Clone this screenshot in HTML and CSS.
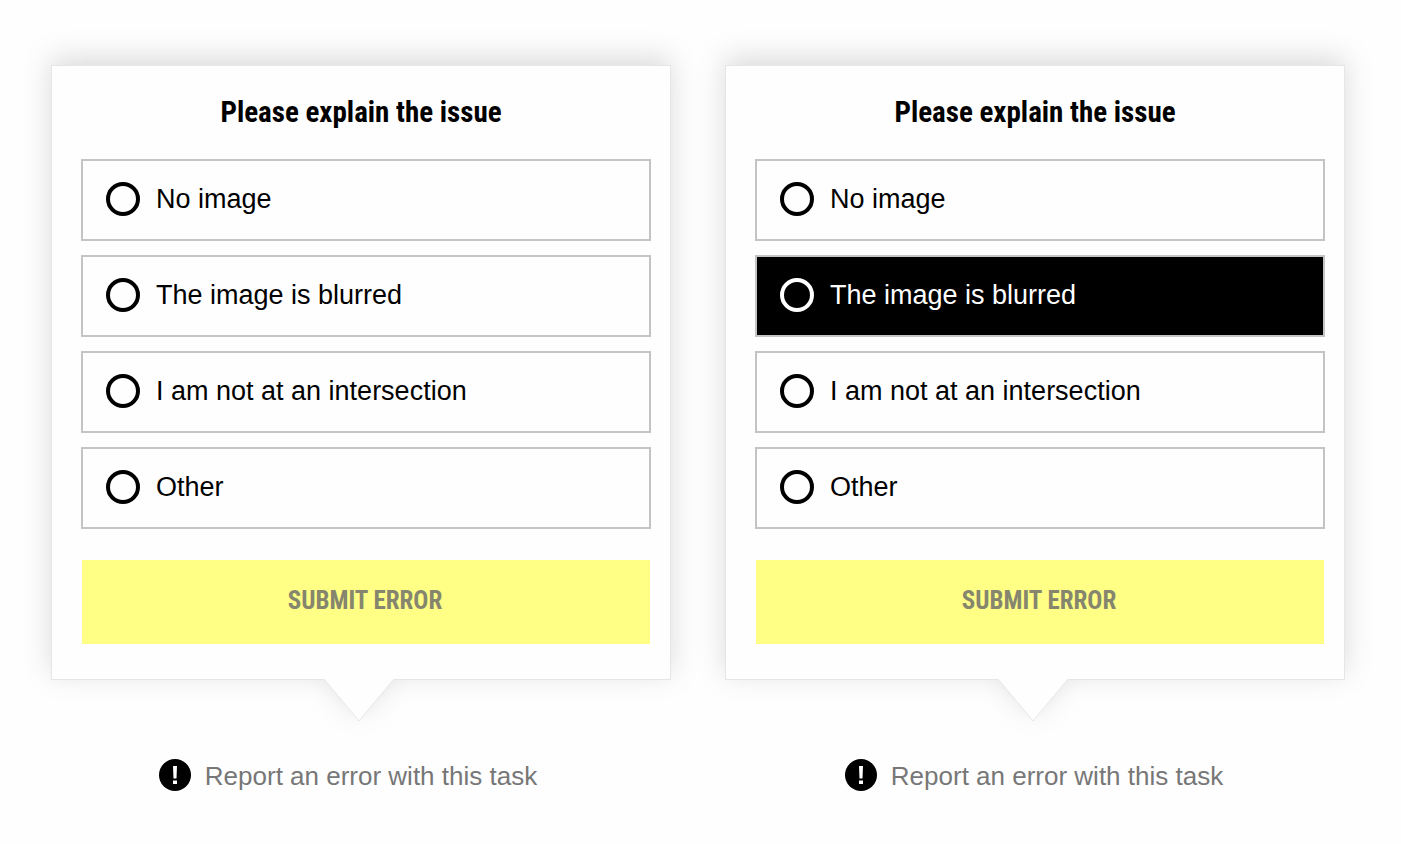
FILE: index.html
```html
<!DOCTYPE html>
<html lang="en">
<head>
    <meta charset="UTF-8">
    <meta name="viewport" content="width=device-width, initial-scale=1.0">
    <title>Report an error</title>
    <link rel="stylesheet" href="styles.css">
</head>
<body>
    <main class="popups">
        <form class="popup">
            <h2 class="popup-title" id="title1">Please explain the issue</h2>
            <fieldset class="options" aria-labelledby="title1">
                <label class="option"><input type="radio" name="issue" value="none"><span>No image</span></label>
                <label class="option"><input type="radio" name="issue" value="blurred"><span>The image is blurred</span></label>
                <label class="option"><input type="radio" name="issue" value="intersection"><span>I am not at an intersection</span></label>
                <label class="option"><input type="radio" name="issue" value="other"><span>Other</span></label>
            </fieldset>
            <button type="submit" class="submit">SUBMIT ERROR</button>
            <svg class="arrow" viewBox="0 0 70 43" aria-hidden="true">
                <path d="M0 0 L35 42 L70 0 Z" fill="#fefefe"/>
                <path d="M0.5 0.5 L35 42 L69.5 0.5" fill="none" stroke="#e6e6e6"/>
            </svg>
        </form>

        <form class="popup">
            <h2 class="popup-title" id="title2">Please explain the issue</h2>
            <fieldset class="options" aria-labelledby="title2">
                <label class="option"><input type="radio" name="issue" value="none"><span>No image</span></label>
                <label class="option"><input type="radio" name="issue" value="blurred" checked><span>The image is blurred</span></label>
                <label class="option"><input type="radio" name="issue" value="intersection"><span>I am not at an intersection</span></label>
                <label class="option"><input type="radio" name="issue" value="other"><span>Other</span></label>
            </fieldset>
            <button type="submit" class="submit">SUBMIT ERROR</button>
            <svg class="arrow" viewBox="0 0 70 43" aria-hidden="true">
                <path d="M0 0 L35 42 L70 0 Z" fill="#fefefe"/>
                <path d="M0.5 0.5 L35 42 L69.5 0.5" fill="none" stroke="#e6e6e6"/>
            </svg>
        </form>
    </main>

    <footer class="reports">
        <button type="button" class="report">
            <svg class="report-icon" viewBox="0 0 32 32" aria-hidden="true">
                <circle cx="16" cy="16" r="16" fill="#000"/>
                <path d="M14 7 H18 L17.5 19.5 H14.5 Z M14 21.5 H18 V25 H14 Z" fill="#fff"/>
            </svg>
            <span>Report an error with this task</span>
        </button>
        <button type="button" class="report">
            <svg class="report-icon" viewBox="0 0 32 32" aria-hidden="true">
                <circle cx="16" cy="16" r="16" fill="#000"/>
                <path d="M14 7 H18 L17.5 19.5 H14.5 Z M14 21.5 H18 V25 H14 Z" fill="#fff"/>
            </svg>
            <span>Report an error with this task</span>
        </button>
    </footer>
</body>
</html>
```

FILE: styles.css
```css
/* General Styles */
* {
    box-sizing: border-box;
}
body {
    margin: 0;
    font-family: "Liberation Sans", Arial, sans-serif;
    background-color: #fefefe;
    color: #000;
}

/* Popups */
.popups {
    display: grid;
    grid-template-columns: 1fr 1fr;
    gap: 54px;
    padding: 65px 56px 0 51px;
}
.popup {
    position: relative;
    display: flex;
    flex-direction: column;
    padding: 24px 0 35px;
    background-color: #fefefe;
    border: 1px solid #e6e6e6;
    filter: drop-shadow(0 -7px 14px rgba(0, 0, 0, 0.14));
}
.popup-title {
    margin: 0 0 25px;
    text-align: center;
    font-family: "Roboto Condensed", Roboto, sans-serif;
    font-size: 29px;
    line-height: 44px;
    font-weight: bold;
}
.arrow {
    position: absolute;
    top: 100%;
    left: calc(50% - 37px);
    width: 70px;
    height: 43px;
}

/* Options */
.options {
    display: flex;
    flex-direction: column;
    gap: 14px;
    margin: 0 19px 0 29px;
    padding: 0;
    border: none;
}
.option {
    display: flex;
    align-items: center;
    gap: 16px;
    height: 82px;
    padding: 0 23px 2px;
    border: 2px solid #c4c4c4;
    font-size: 27px;
    line-height: 32px;
    cursor: pointer;
}
.option input {
    appearance: none;
    width: 34px;
    height: 34px;
    margin: 0;
    border: 4px solid #000;
    border-radius: 50%;
}
.option:has(input:checked) {
    background-color: #000;
    color: #fff;
}
.option input:checked {
    border-color: #fff;
}

/* Submit */
.submit {
    height: 84px;
    margin: 31px 20px 0 30px;
    padding: 0 2px 4px 0;
    border: none;
    background-color: #fffe85;
    color: #86866f;
    font-family: "Roboto Condensed", Roboto, sans-serif;
    font-size: 25px;
    font-weight: bold;
    cursor: pointer;
}

/* Report links */
.reports {
    display: grid;
    grid-template-columns: 1fr 1fr;
    justify-items: center;
    padding: 78px 24px 24px 5px;
}
.report {
    display: flex;
    align-items: center;
    gap: 14px;
    padding: 0;
    border: none;
    background: none;
    color: #777;
    font-family: inherit;
    font-size: 26px;
    line-height: 32px;
    cursor: pointer;
}
.report span {
    padding-top: 2px;
}
.report-icon {
    width: 32px;
    height: 32px;
}
```
